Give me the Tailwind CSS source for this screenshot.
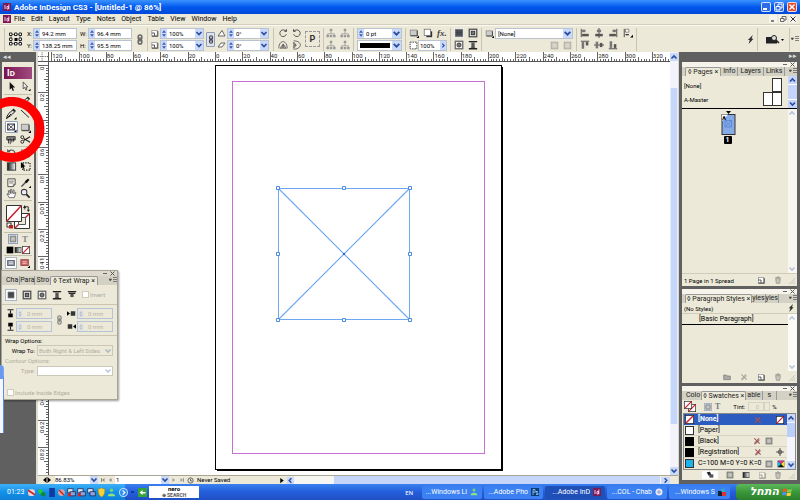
<!DOCTYPE html>
<html lang="en">
<head>
<meta charset="utf-8">
<title>Adobe InDesign CS3</title>
<script src="https://cdn.jsdelivr.net/npm/@tailwindcss/browser@4"></script>
</head>
<body class="h-screen overflow-hidden flex flex-col bg-[#ece9d8] text-black text-[7px] leading-[9px] font-['Roboto',sans-serif]">

<svg class="absolute w-0 h-0" aria-hidden="true">
  <symbol id="down" viewBox="0 0 8 8"><path d="M1.500 2.500L4 5L6.500 2.500" fill="none" stroke="#2a4a9a" stroke-width="1.600"/></symbol>
  <symbol id="up" viewBox="0 0 8 8"><path d="M1.500 5.500L4 3L6.500 5.500" fill="none" stroke="#2a4a9a" stroke-width="1.600"/></symbol>
  <symbol id="right" viewBox="0 0 8 8"><path d="M3 1.500L5.500 4L3 6.500" fill="none" stroke="#2a4a9a" stroke-width="1.600"/></symbol>
  <symbol id="left" viewBox="0 0 8 8"><path d="M5 1.500L2.500 4L5 6.500" fill="none" stroke="#2a4a9a" stroke-width="1.600"/></symbol>
  <symbol id="spin" viewBox="0 0 6 9"><rect width="6" height="9" fill="#c9d9fb"/><path d="M1 3.800L3 1.300L5 3.800zM1 5.200L3 7.700L5 5.200z" fill="#3c5ca8"/></symbol>
  <symbol id="chain" viewBox="0 0 8 12"><rect x="2" y="1" width="4" height="5" rx="2" fill="none" stroke="currentColor" stroke-width="1.600"/><rect x="2" y="6" width="4" height="5" rx="2" fill="none" stroke="currentColor" stroke-width="1.600"/><path d="M4 3.500V8.500" stroke="currentColor" stroke-width="1.600"/></symbol>
  <symbol id="menu" viewBox="0 0 8 8"><path d="M0 3h2.600L1.300 5zM4 1.500h4M4 3.500h4M4 5.500h4" fill="#444" stroke="#555" stroke-width=".7"/></symbol>
  <symbol id="id" viewBox="0 0 8 8"><rect width="8" height="8" fill="#7d1a55"/><path d="M2 2V6M4 3.500H5.500V6H4zM5.800 1.500V6" stroke="#fbd8ec" stroke-width=".9" fill="none"/></symbol>
  <symbol id="arrow" viewBox="0 0 12 12"><path d="M4 1V9.500L6 7.700L7.300 11L8.700 10.300L7.400 7.200H10z" fill="#111"/></symbol>
  <symbol id="arrow2" viewBox="0 0 12 12"><path d="M3.500 1V8.500L5.200 7L6.500 10L7.600 9.400L6.500 6.500H8.500z" fill="#eee" stroke="#333" stroke-width=".8"/><path d="M9 11h2.500V8.500z"/></symbol>
  <symbol id="pen" viewBox="0 0 12 12"><path d="M1.500 10.500C2 7 4.500 4 8 2L9.500 4C7 7 4 9 1.500 10.500L6 6" fill="#ddd" stroke="#222" stroke-width="1"/><path d="M8 1L10.500 3.500" stroke="#222" stroke-width="1.500"/><path d="M9 11.500h2.500V9z"/></symbol>
  <symbol id="line" viewBox="0 0 12 12"><path d="M2 2L10 9.500" stroke="#222" stroke-width="1"/></symbol>
  <symbol id="frame" viewBox="0 0 12 12"><rect x="1.500" y="2.500" width="8" height="7" fill="#fff" stroke="#223" stroke-width="1.200"/><path d="M1.500 2.500L9.500 9.500M9.500 2.500L1.500 9.500" stroke="#334"/><path d="M9 12h3V9z"/></symbol>
  <symbol id="rect" viewBox="0 0 12 12"><rect x="1.500" y="2.500" width="8" height="6.500" fill="#ccc" stroke="#888"/><path d="M2 9.500H10V3" fill="none" stroke="#333" stroke-width="1"/><path d="M9 12h3V9z"/></symbol>
  <symbol id="button" viewBox="0 0 12 12"><path d="M1 2H11V6H1z" fill="#888" stroke="#222"/><path d="M3 5V10M5 4V11M7 5V9M9 4V8" stroke="#222"/></symbol>
  <symbol id="scissors" viewBox="0 0 12 12"><path d="M4 7L11 3M4 5L11 9" stroke="#222" stroke-width="1.200"/><circle cx="2.500" cy="3.500" r="1.600" fill="none" stroke="#222"/><circle cx="2.500" cy="8.500" r="1.600" fill="none" stroke="#222"/></symbol>
  <symbol id="cw" viewBox="0 0 12 12"><path d="M9.500 4A4 4 0 1 0 10 7.500" fill="none" stroke="#555" stroke-width="1.200"/><path d="M7 4.500H10.800V1z" fill="#555"/></symbol>
  <symbol id="ccw" viewBox="0 0 12 12"><path d="M2.500 4A4 4 0 1 1 2 7.500" fill="none" stroke="#555" stroke-width="1.200"/><path d="M5 4.500H1.200V1z" fill="#555"/></symbol>
  <symbol id="type" viewBox="0 0 12 12"><path d="M2.500 4V2H9.500V4M6 2V10M4.500 10H7.500" fill="none" stroke="#222" stroke-width="1.200"/></symbol>
  <symbol id="scale" viewBox="0 0 12 12"><rect x="1.500" y="6" width="4" height="4" fill="#fff" stroke="#222"/><rect x="1.500" y="2" width="8" height="8" fill="none" stroke="#555" stroke-dasharray="1.500 1"/></symbol>
  <linearGradient id="g"><stop stop-color="#111"/><stop offset="1" stop-color="#fff"/></linearGradient>
  <symbol id="grad" viewBox="0 0 12 12"><rect x="1.500" y="2" width="9" height="8" fill="url(#g)" stroke="#333"/></symbol>
  <symbol id="free" viewBox="0 0 12 12"><rect x="3" y="2" width="8" height="8" fill="none" stroke="#222" stroke-width="1.300" stroke-dasharray="1.500 1.200"/><path d="M1 1V8L3 6.500L4 9L5 8.500L4 6H6z"/></symbol>
  <symbol id="note" viewBox="0 0 12 12"><path d="M2 2H10V8L8 10.500H2z" fill="#f6f4e6" stroke="#444"/><path d="M3.500 4.500H8.500M3.500 6.500H8M10 8H8V10.500" stroke="#555" fill="none" stroke-width=".8"/></symbol>
  <symbol id="dropper" viewBox="0 0 12 12"><path d="M1.500 10.500L7 5" stroke="#444" stroke-width="1.500"/><path d="M6 4L8 6M7 5L9.500 2.500" stroke="#111" stroke-width="2.400"/><path d="M9.500 12H12V9.500z"/></symbol>
  <symbol id="hand" viewBox="0 0 12 12"><path d="M3.500 10.500L1 6.500L2 6L3.500 7.500L2.500 3L3.700 2.800L4.800 6L5 1.500H6.200L6.500 6L8 2L9 2.400L8.300 6.500L10 4.500L10.800 5L9 10.500z" fill="#fff" stroke="#444" stroke-width=".8"/></symbol>
  <symbol id="zoom" viewBox="0 0 12 12"><circle cx="4.500" cy="4.500" r="3" fill="#eef" stroke="#444" stroke-width="1.100"/><path d="M7 7L10.500 10.500" stroke="#222" stroke-width="2"/></symbol>
  <symbol id="none" viewBox="0 0 12 12"><rect x=".5" y=".5" width="11" height="11" fill="#fff" stroke="#222"/><path d="M1 11L11 1" stroke="#d81e2c" stroke-width="1.800"/></symbol>
  <symbol id="sq" viewBox="0 0 12 12"><rect x="1.500" y="1.500" width="9" height="9" fill="#a4a49e" stroke="#666"/><rect x="3.500" y="3.500" width="5" height="5" fill="#c4c4c0"/></symbol>
  <symbol id="black" viewBox="0 0 12 12"><rect x="1" y="1" width="10" height="10"/></symbol>
  <symbol id="screen" viewBox="0 0 12 12"><rect x="1" y="2" width="10" height="8" fill="#8c98a8" stroke="#445"/><path d="M3 4.500H9M3 7H9" stroke="#fff"/></symbol>
  <symbol id="screenr" viewBox="0 0 12 12"><rect x="1" y="2" width="9" height="7" fill="#c66" stroke="#844"/><path d="M3 4.500H8M3 6.500H8" stroke="#f7c8c8"/><path d="M9 12H12V9z"/></symbol>
  <symbol id="w1" viewBox="0 0 12 12"><rect x="1.500" y="1.500" width="9" height="9" fill="#555b60" stroke="#777"/><path d="M2 3.500H10M2 5.500H10M2 7.500H10" stroke="#2e3338" stroke-width=".8"/></symbol>
  <symbol id="w2" viewBox="0 0 12 12"><rect x="1.500" y="1.500" width="9" height="9" fill="#ddd" stroke="#555" stroke-width="1.600"/><rect x="4" y="4" width="4" height="4" fill="#777" stroke="#333"/></symbol>
  <symbol id="w3" viewBox="0 0 12 12"><rect x="1.500" y="1.500" width="9" height="9" fill="#eee" stroke="#666" stroke-width="1.500"/><circle cx="6" cy="6" r="2.400" fill="#777" stroke="#333"/></symbol>
  <symbol id="w4" viewBox="0 0 12 12"><path d="M1 2H11M1 10.500H11" stroke="#222" stroke-width="1.600"/><path d="M3 3L6 5.500L9 3zM3 9.500L6 7L9 9.500z" fill="#555"/><rect x="4" y="4" width="4" height="4.500" fill="#555"/></symbol>
  <symbol id="w5" viewBox="0 0 12 12"><path d="M1 2H11M2 4H10" stroke="#222" stroke-width="1.400"/><rect x="4" y="4.500" width="4" height="4" fill="#555"/></symbol>
  <symbol id="al" viewBox="0 0 12 12"><path d="M1.500 1V11" stroke="#333"/><rect x="2.500" y="2" width="4" height="3" fill="#777"/><rect x="2.500" y="7" width="8" height="3" fill="#555"/></symbol>
  <symbol id="ac" viewBox="0 0 12 12"><path d="M6 0V12" stroke="#333"/><rect x="3.500" y="2" width="5" height="3" fill="#777"/><rect x="1.500" y="7" width="9" height="3" fill="#555"/></symbol>
  <symbol id="ar" viewBox="0 0 12 12"><path d="M10.500 1V11" stroke="#333"/><rect x="5.500" y="2" width="4" height="3" fill="#777"/><rect x="1.500" y="7" width="8" height="3" fill="#555"/></symbol>
  <symbol id="at" viewBox="0 0 12 12"><path d="M1 1.500H11" stroke="#333"/><rect x="2" y="2.500" width="3" height="8" fill="#777"/><rect x="7" y="2.500" width="3" height="4" fill="#555"/></symbol>
  <symbol id="am" viewBox="0 0 12 12"><path d="M0 6H12" stroke="#333"/><rect x="2" y="2" width="3" height="8" fill="#777"/><rect x="7" y="3.500" width="3" height="5" fill="#555"/></symbol>
  <symbol id="ab" viewBox="0 0 12 12"><path d="M1 10.500H11" stroke="#333"/><rect x="2" y="1.500" width="3" height="8" fill="#777"/><rect x="7" y="5" width="3" height="4.500" fill="#555"/></symbol>
  <symbol id="rel" viewBox="0 0 12 12"><path d="M1.500 1V11" stroke="#333"/><path d="M3 1.500H7V5H3z" fill="#fff" stroke="#777"/><path d="M3 8H7" stroke="#333" stroke-width="1.500"/><path d="M8.500 11.500H12V8z"/></symbol>
  <symbol id="tree" viewBox="0 0 12 12"><path d="M6 4V7M2 10V7H10V10" fill="none" stroke="#999"/><path d="M4.500 1H7.500V4H4.500zM.5 8.500H3.500V11H.5zM8.500 8.500H11.500V11H8.500zM4.500 8.500H7.500V11H4.500z" fill="#999"/></symbol>
  <symbol id="flip" viewBox="0 0 12 12"><path d="M1 10C1 4 4 2 6 2S11 4 11 10" fill="none" stroke="#555"/><path d="M6 5L2.500 10H5.500zM6.500 5L10 10H6.500z" fill="#aaa" stroke="#444" stroke-width=".7"/></symbol>
  <symbol id="flipv" viewBox="0 0 12 12"><path d="M2 1C8 1 10 4 10 6S8 11 2 11" fill="none" stroke="#555"/><path d="M5 6L2 2.500V5.500zM5 6.500L2 10V6.500z" fill="#aaa" stroke="#444" stroke-width=".7"/></symbol>
  <symbol id="shadow" viewBox="0 0 12 12"><path d="M4 4H11V11H4z" fill="#333"/><rect x="1.500" y="1.500" width="7.500" height="7.500" fill="#fff" stroke="#777"/></symbol>
  <symbol id="dashed" viewBox="0 0 12 12"><rect x="1.500" y="1.500" width="9" height="9" fill="#fff" stroke="#444" stroke-width="1.300" stroke-dasharray="2 1.200"/></symbol>
  <symbol id="bolt" viewBox="0 0 12 12"><path d="M9 0L2.500 6.500H5L3.500 12L10 5H7.500z" fill="#333"/></symbol>
  <symbol id="trash" viewBox="0 0 12 12"><path d="M2.500 4L3.500 11H8.500L9.500 4z" fill="#c8c6ba" stroke="#888"/><path d="M2 2.500H10M5 1H7" stroke="#888" stroke-width="1.200"/></symbol>
  <symbol id="new" viewBox="0 0 12 12"><rect x="2" y="2" width="8" height="8" fill="#fff" stroke="#888"/><path d="M2 6H6V10M2 11H11V3" fill="none" stroke="#333" stroke-width="1.200"/></symbol>
  <symbol id="folder" viewBox="0 0 12 12"><path d="M1 3H5L6 4.500H11V10H1z" fill="#aaa" stroke="#777"/></symbol>
  <symbol id="grip" viewBox="0 0 12 12"><path d="M12 2L2 12M12 6L6 12M12 10L10 12" stroke="#aaa"/></symbol>
  <symbol id="pencilx" viewBox="0 0 12 12"><path d="M2 10L9 2M2 2L10 10" stroke="#b0505c" stroke-width="1.600"/><path d="M3 11L10 4" stroke="#554" stroke-width="1.400"/></symbol>
  <symbol id="cross" viewBox="0 0 12 12"><circle cx="6" cy="6" r="2.800" fill="none" stroke="#222"/><path d="M6 0V12M0 6H12" stroke="#222"/></symbol>
  <symbol id="cmyk" viewBox="0 0 12 12"><rect x="1" y="1" width="10" height="10" fill="#111"/><path d="M1 1L6 6L1 11z" fill="#19b5e8"/><path d="M11 1L6 6L11 11z" fill="#f3e32a"/><path d="M1 1H11L6 6z" fill="#d8359a"/></symbol>
  <symbol id="swap" viewBox="0 0 8 8"><path d="M2 5V2H6V6" fill="none" stroke="#222"/><path d="M0 3.500L3.500 3.500L2 0zM4.500 5.500H8L6 8z" fill="#222"/></symbol>
  <symbol id="msn" viewBox="0 0 12 12"><circle cx="6" cy="3" r="2.300" fill="#7ad66a"/><path d="M1 11C1 6 11 6 11 11z" fill="#8fe27e"/></symbol>
  <symbol id="pcs" viewBox="0 0 12 12"><rect x="1" y="1" width="7" height="5.500" fill="#dde6f7" stroke="#224"/><rect x="4" y="5" width="7" height="5.500" fill="#8aa6e0" stroke="#224"/></symbol>
  <symbol id="pcx" viewBox="0 0 12 12"><use href="#pcs"/><path d="M1 7L5 11M5 7L1 11" stroke="#e02020" stroke-width="1.600"/></symbol>
</svg>

<!-- Title bar -->
<header class="h-[14px] shrink-0 flex items-center px-[3px] gap-[3px] bg-linear-to-b from-[#3a92ff] via-[#0058ee] to-[#0048d8] text-white">
  <svg class="size-[8px]"><use href="#id"/></svg>
  <h1 class="flex-1 font-bold text-[8px] leading-[13px] whitespace-nowrap">Adobe InDesign CS3 - [Untitled-1 @ 86%]</h1>
  <button aria-label="Minimize" class="size-[10px] rounded-[2px] border border-white/80 bg-[#2f6ae8] flex items-end p-[1px]"><span class="w-[4px] h-[2px] bg-white"></span></button>
  <button aria-label="Restore" class="size-[10px] rounded-[2px] border border-white/80 bg-[#2f6ae8]"><svg viewBox="0 0 8 8" class="size-[8px]"><path d="M3 3V1H7V5H5M1 3.500H5V7H1z" fill="none" stroke="#fff"/></svg></button>
  <button aria-label="Close" class="size-[10px] rounded-[2px] border border-white/80 bg-[#e0492a]"><svg viewBox="0 0 8 8" class="size-[8px]"><path d="M1.500 1.500L6.500 6.500M6.500 1.500L1.500 6.500" stroke="#fff" stroke-width="1.500"/></svg></button>
</header>

<!-- Menu bar -->
<nav class="h-[11px] shrink-0 flex items-center pl-[3px] pr-[3px] gap-[6px] border-b border-[#d2cebc]">
  <svg class="size-[8px] -mr-[3px]"><use href="#id"/></svg>
  <button>File</button><button>Edit</button><button>Layout</button><button>Type</button><button>Notes</button><button>Object</button><button>Table</button><button>View</button><button>Window</button><button>Help</button>
  <div class="ml-auto flex gap-[2px]">
    <button aria-label="Minimize document" class="size-[8px] bg-[#f6f4ec]"><svg viewBox="0 0 8 8"><path d="M2 6H5" stroke="#333" stroke-width="1.200"/></svg></button>
    <button aria-label="Restore document" class="size-[8px] bg-[#f6f4ec]"><svg viewBox="0 0 8 8"><path d="M3 3V1.500H7V5H5M1.500 3.500H5V6.500H1.500z" fill="none" stroke="#444" stroke-width=".8"/></svg></button>
    <button aria-label="Close document" class="size-[8px] bg-[#f6f4ec]"><svg viewBox="0 0 8 8"><path d="M1.500 1.500L6.500 6.500M6.500 1.500L1.500 6.500" stroke="#333"/></svg></button>
  </div>
</nav>

<!-- Control bar -->
<section aria-label="Control" class="h-[27px] shrink-0 flex items-center border-t border-[#faf8f0]">
  <div class="w-[5px] h-[23px] border-r border-[#c9c5b2] mr-[4px]"></div>
  <svg class="w-[13px] h-[14px] mr-[4px]" viewBox="0 0 13 14"><path d="M2 2.500H11V11.500H2z" fill="none" stroke="#777"/><path d="M5.500 6H8.500V9H5.500z"/><g fill="#fff" stroke="#222"><path d="M.5 1H3V3.500H.5zM5.500 1H8V3.500H5.500zM10 1H12.500V3.500H10zM.5 6H3V8.500H.5zM10 6H12.500V8.500H10zM.5 10.500H3V13H.5zM5.500 10.500H8V13H5.500zM10 10.500H12.500V13H10z"/></g></svg>
  <div class="flex flex-col gap-[1px] w-[50px] text-[6px] ml-[1px]">
    <label class="flex items-center h-[11px]"><span class="w-[6px]">X:</span><span class="flex flex-1 min-w-0 h-[11px] bg-white border border-[#b9c3d0] items-center"><svg class="w-[6px] h-[9px]"><use href="#spin"/></svg><input class="min-w-0 flex-1 pl-[2px] outline-none" value="94.2 mm"></span></label>
    <label class="flex items-center h-[11px]"><span class="w-[6px]">Y:</span><span class="flex flex-1 min-w-0 h-[11px] bg-white border border-[#b9c3d0] items-center"><svg class="w-[6px] h-[9px]"><use href="#spin"/></svg><input class="min-w-0 flex-1 pl-[2px] outline-none" value="138.25 mm"></span></label>
  </div>
  <div class="flex flex-col gap-[1px] w-[52px] ml-[3px] text-[6px]">
    <label class="flex items-center h-[11px]"><span class="w-[8px]">W:</span><span class="flex flex-1 min-w-0 h-[11px] bg-white border border-[#b9c3d0] items-center"><svg class="w-[6px] h-[9px]"><use href="#spin"/></svg><input class="min-w-0 flex-1 pl-[2px] outline-none" value="96.4 mm"></span></label>
    <label class="flex items-center h-[11px]"><span class="w-[8px]">H:</span><span class="flex flex-1 min-w-0 h-[11px] bg-white border border-[#b9c3d0] items-center"><svg class="w-[6px] h-[9px]"><use href="#spin"/></svg><input class="min-w-0 flex-1 pl-[2px] outline-none" value="95.5 mm"></span></label>
  </div>
  <button aria-label="Constrain size" class="w-[15px] flex justify-center text-[#666]"><svg class="w-[8px] h-[11px]"><use href="#chain"/></svg></button>
  <div class="w-px h-[23px] bg-[#c9c5b2] mr-[2px]"></div>
  <div class="flex flex-col gap-[1px] w-[54px] text-[6px]">
    <label class="flex items-center h-[11px]"><svg class="w-[9px] h-[8px] mr-px" role="img" aria-label="Scale X"><use href="#new"/></svg><span class="flex flex-1 min-w-0 h-[11px] bg-white border border-[#b9c3d0] items-center"><svg class="w-[6px] h-[9px]"><use href="#spin"/></svg><select class="appearance-none min-w-0 flex-1 pl-[2px] outline-none"><option>100%</option></select><svg class="w-[8px] h-[9px] bg-[#c9d9fb]"><use href="#down"/></svg></span></label>
    <label class="flex items-center h-[11px]"><svg class="w-[9px] h-[8px] mr-px" role="img" aria-label="Scale Y"><use href="#new"/></svg><span class="flex flex-1 min-w-0 h-[11px] bg-white border border-[#b9c3d0] items-center"><svg class="w-[6px] h-[9px]"><use href="#spin"/></svg><select class="appearance-none min-w-0 flex-1 pl-[2px] outline-none"><option>100%</option></select><svg class="w-[8px] h-[9px] bg-[#c9d9fb]"><use href="#down"/></svg></span></label>
  </div>
  <button aria-label="Constrain scale" class="w-[9px] h-[15px] mx-[2px] border border-[#8e9cb4] bg-[#dfe3ea] rounded-[1px] flex items-center justify-center text-[#445]"><svg class="w-[6px] h-[11px]"><use href="#chain"/></svg></button>
  <div class="flex flex-col gap-[1px] w-[52px] text-[6px]">
    <label class="flex items-center h-[11px]"><svg class="w-[9px] h-[8px] mr-px" viewBox="0 0 9 8" role="img" aria-label="Rotation"><path d="M1 7H8L5 1.500z" fill="#fff" stroke="#666"/></svg><span class="flex flex-1 min-w-0 h-[11px] bg-white border border-[#b9c3d0] items-center"><svg class="w-[6px] h-[9px]"><use href="#spin"/></svg><select class="appearance-none min-w-0 flex-1 pl-[2px] outline-none"><option>0°</option></select><svg class="w-[8px] h-[9px] bg-[#c9d9fb]"><use href="#down"/></svg></span></label>
    <label class="flex items-center h-[11px]"><svg class="w-[9px] h-[8px] mr-px" viewBox="0 0 9 8" role="img" aria-label="Shear"><path d="M1 6H5L8 2H4z" fill="#fff" stroke="#666"/></svg><span class="flex flex-1 min-w-0 h-[11px] bg-white border border-[#b9c3d0] items-center"><svg class="w-[6px] h-[9px]"><use href="#spin"/></svg><select class="appearance-none min-w-0 flex-1 pl-[2px] outline-none"><option>0°</option></select><svg class="w-[8px] h-[9px] bg-[#c9d9fb]"><use href="#down"/></svg></span></label>
  </div>
  <div class="w-px h-[23px] bg-[#c9c5b2] mx-[4px]"></div>
  <div class="grid grid-cols-2 gap-x-[4px] gap-y-[2px]">
    <svg class="size-[10px]"><use href="#cw"/></svg><svg class="size-[10px]"><use href="#ccw"/></svg><svg class="size-[10px]"><use href="#flip"/></svg><svg class="size-[10px]"><use href="#flipv"/></svg>
  </div>
  <div class="w-[15px] h-[16px] mx-[3px] flex items-center justify-center border border-dashed border-[#999] text-[9px] font-bold text-[#333]">P</div>
  <div class="w-px h-[23px] bg-[#c9c5b2] mr-[2px]"></div>
  <div class="grid grid-cols-2 gap-x-[4px] gap-y-[2px]">
    <svg class="size-[10px]"><use href="#tree"/></svg><svg class="size-[10px]"><use href="#tree"/></svg><svg class="size-[10px]"><use href="#tree"/></svg><svg class="size-[10px]"><use href="#tree"/></svg>
  </div>
  <div class="w-px h-[23px] bg-[#c9c5b2] mx-[3px]"></div>
  <div class="flex flex-col gap-[1px] w-[45px] text-[6px]">
    <span class="flex h-[11px] bg-white border border-[#b9c3d0] items-center"><svg class="w-[6px] h-[9px]"><use href="#spin"/></svg><select aria-label="Stroke weight" class="appearance-none min-w-0 flex-1 pl-[2px] outline-none"><option>0 pt</option></select><svg class="size-[9px] bg-[#c9d9fb]"><use href="#down"/></svg></span>
    <button aria-label="Stroke type" class="flex h-[11px] bg-white border border-[#b9c3d0] items-center"><span class="flex-1 h-[5px] bg-black mx-[2px]"></span><svg class="size-[9px] bg-[#c9d9fb]"><use href="#down"/></svg></button>
  </div>
  <div class="w-px h-[23px] bg-[#c9c5b2] mx-[3px]"></div>
  <div class="flex flex-col gap-[1px] w-[38px] text-[6px]">
    <div class="flex h-[11px] items-center gap-[4px]"><svg class="size-[10px]"><use href="#rect"/></svg><svg class="size-[10px]"><use href="#shadow"/></svg><i class="text-[9px] font-bold text-[#444] font-['Liberation_Serif',serif]">fx.</i></div>
    <label class="flex h-[11px] items-center"><svg class="size-[9px]" role="img" aria-label="Opacity"><use href="#dashed"/></svg><span class="flex flex-1 min-w-0 h-[11px] bg-white border border-[#b9c3d0] items-center"><input class="min-w-0 flex-1 pl-px outline-none" value="100%"><svg class="w-[6px] h-[9px] bg-[#c9d9fb]"><use href="#right"/></svg></span></label>
  </div>
  <div class="w-px h-[23px] bg-[#c9c5b2] mx-[3px]"></div>
  <div class="grid grid-cols-2 gap-x-[4px] gap-y-[2px]">
    <svg class="size-[10px] bg-white"><use href="#w1"/></svg><svg class="size-[10px]"><use href="#w2"/></svg><svg class="size-[10px]"><use href="#w3"/></svg><svg class="size-[10px]"><use href="#w4"/></svg>
  </div>
  <div class="w-px h-[23px] bg-[#c9c5b2] mx-[3px]"></div>
  <div class="flex flex-col gap-[1px] w-[88px] text-[6px]">
    <label class="flex h-[11px] items-center gap-px"><svg class="size-[9px]" role="img" aria-label="Object style"><use href="#rect"/></svg><span class="flex flex-1 min-w-0 h-[11px] bg-white border border-[#b9c3d0] items-center"><select class="appearance-none min-w-0 flex-1 pl-[2px] outline-none"><option>[None]</option></select><svg class="size-[9px] bg-[#c9d9fb]"><use href="#down"/></svg></span></label>
    <div class="flex h-[11px] items-center justify-end gap-[4px] pr-px opacity-50"><svg class="size-[9px]"><use href="#sq"/></svg><svg class="size-[9px]"><use href="#sq"/></svg></div>
  </div>
  <div class="w-px h-[23px] bg-[#c9c5b2] mx-[3px]"></div>
  <div class="grid grid-cols-3 gap-x-[4px] gap-y-[2px]">
    <svg class="size-[10px]"><use href="#al"/></svg><svg class="size-[10px]"><use href="#ac"/></svg><svg class="size-[10px]"><use href="#ar"/></svg>
    <svg class="size-[10px]"><use href="#at"/></svg><svg class="size-[10px]"><use href="#am"/></svg><svg class="size-[10px]"><use href="#ab"/></svg>
  </div>
  <svg class="size-[10px] ml-[5px] mb-[12px]"><use href="#rel"/></svg>
  <div class="w-px h-[23px] bg-[#c9c5b2] ml-[3px]"></div>
  <button aria-label="Quick apply" class="ml-auto"><svg class="size-[9px]"><use href="#bolt"/></svg></button>
  <div class="w-px h-[23px] bg-[#c9c5b2] ml-[2px] mr-[6px]"></div>
  <button aria-label="Bridge" class="w-[24px]"><svg class="w-[22px] h-[10px]" viewBox="0 0 22 10"><path d="M2 3H10L13 6V9.500H2z" fill="#222"/><circle cx="10" cy="4" r="2.500" fill="#ddd" stroke="#222"/><path d="M12 6L15 9" stroke="#222" stroke-width="1.500"/><path d="M17 5h3l-1.500 2z"/></svg></button>
  <div class="w-px h-[23px] bg-[#c9c5b2] mx-[1px]"></div>
  <button aria-label="Control menu" class="mr-px"><svg class="size-[8px]"><use href="#menu"/></svg></button>
</section>

<!-- Workspace -->
<div class="relative flex-1 min-h-0 flex bg-[#606060]">

  <aside aria-label="Tools" class="w-[36px] shrink-0 pr-[2px] pl-[2px]">
    <div class="h-[10px] text-white/80 leading-[10px] pl-px">◂◂</div>
    <div class="bg-[#ece9d8] h-[209px] px-[2px] pt-[5px]">
      <div class="h-[12px] bg-linear-to-r from-[#7a1350] to-[#a04a80] text-white font-bold text-[9px] leading-[12px] pl-[3px]">I<span class="text-[8px]">D</span></div>
      <div class="grid grid-cols-2 justify-items-center items-center py-[2px] border-b border-[#c4c0ae]"><button aria-label="Selection"><svg class="size-[11px]"><use href="#arrow"/></svg></button><button aria-label="Direct selection"><svg class="size-[11px]"><use href="#arrow2"/></svg></button></div>
      <div class="grid grid-cols-2 justify-items-center items-center gap-y-px py-px border-b border-[#c4c0ae]">
        <button aria-label="Type"><svg class="size-[11px]"><use href="#type"/></svg></button><button aria-label="Pencil"><svg class="size-[11px]"><use href="#pen"/></svg></button>
        <button aria-label="Pen"><svg class="size-[12px]"><use href="#pen"/></svg></button><button aria-label="Line"><svg class="size-[12px]"><use href="#line"/></svg></button>
        <button aria-label="Rectangle frame" class="bg-white border border-[#8ea0be] rounded-[1px]"><svg class="w-[11px] h-[10px]"><use href="#frame"/></svg></button><button aria-label="Rectangle"><svg class="size-[11px]"><use href="#rect"/></svg></button>
        <button aria-label="Button"><svg class="size-[10px]"><use href="#button"/></svg></button><button aria-label="Scissors"><svg class="size-[11px]"><use href="#scissors"/></svg></button>
      </div>
      <div class="grid grid-cols-2 justify-items-center items-center gap-y-[2px] pt-px pb-[2px] border-b border-[#c4c0ae]">
        <button aria-label="Rotate"><svg class="size-[11px]"><use href="#ccw"/></svg></button><button aria-label="Scale"><svg class="size-[11px]"><use href="#scale"/></svg></button>
        <button aria-label="Gradient"><svg class="size-[11px]"><use href="#grad"/></svg></button><button aria-label="Free transform"><svg class="size-[11px]"><use href="#free"/></svg></button>
      </div>
      <div class="grid grid-cols-2 justify-items-center items-center pt-[2px] pb-px border-b border-[#c4c0ae]">
        <button aria-label="Note"><svg class="size-[11px]"><use href="#note"/></svg></button><button aria-label="Eyedropper"><svg class="size-[11px]"><use href="#dropper"/></svg></button>
        <button aria-label="Hand"><svg class="size-[11px]"><use href="#hand"/></svg></button><button aria-label="Zoom"><svg class="size-[11px]"><use href="#zoom"/></svg></button>
      </div>
      <div class="pt-[4px] pb-[3px] border-b border-[#c4c0ae]">
        <svg class="w-[26px] h-[24px] ml-px" viewBox="0 0 26 24"><path d="M9.500 8.500H24.500V23.500H9.500z" fill="#fff" stroke="#333"/><path d="M10 23L24 9" stroke="#c8202e" stroke-width="1.500"/><path d="M13.500 12.500H20.500V19.500H13.500z" fill="#ece9d8" stroke="#555"/><path d="M1.500 .5H16.500V16.500H1.500z" fill="#fff" stroke="#333"/><path d="M2 16L16 1" stroke="#c8202e" stroke-width="1.500"/><use href="#swap" x="18" y="0" width="7" height="7"/><rect x="2" y="18" width="4" height="4" fill="#fff" stroke="#333"/><path d="M4 20H8V23.500H4z" fill="#b22"/></svg>
      </div>
      <div class="flex justify-center gap-[4px] py-px items-center"><button aria-label="Container" class="border border-[#8ea0be] bg-white"><svg class="size-[8px]"><use href="#sq"/></svg></button><span class="font-bold text-[#888] font-['Liberation_Serif',serif] text-[9px] leading-[10px]">T</span></div>
      <div class="flex justify-between px-[2px] py-px items-center border-b border-[#c4c0ae]"><svg class="size-[8px]"><use href="#black"/></svg><svg class="size-[8px]"><use href="#grad"/></svg><svg class="size-[8px]"><use href="#none"/></svg></div>
      <div class="grid grid-cols-2 justify-items-center items-center pt-px"><button aria-label="Normal view" class="border border-[#aab4c8] bg-white p-px"><svg class="size-[8px]"><use href="#screen"/></svg></button><button aria-label="Preview"><svg class="size-[10px]"><use href="#screenr"/></svg></button></div>
    </div>
  </aside>

  <main class="flex-1 min-w-0 flex flex-col bg-white border-l-2 border-[#dedbd0]">
    <div class="flex-1 min-h-0 flex">
      <div class="flex-1 min-w-0 flex flex-col">
        <div class="flex h-[10px] shrink-0 border-b border-[#555]">
          <svg class="w-[11px] h-[9px] border-r border-[#555] shrink-0" viewBox="0 0 11 9"><path d="M0 4.500H11M4.500 0V9" stroke="#444" stroke-dasharray="1 1"/></svg>
          <svg id="hr" class="flex-1 min-w-0 h-[9px]"></svg>
        </div>
        <div class="flex-1 min-h-0 flex">
          <svg id="vr" class="w-[11px] h-full shrink-0 border-r border-[#555]"></svg>
          <div class="flex-1 min-w-0 overflow-hidden pl-[166px] pt-[3px]">
            <svg class="w-[290px] h-[408px]" viewBox="0 0 290 408" fill="none">
              <path d="M286 2H288V406H2V404H286z" fill="#000"/>
              <rect x=".5" y=".5" width="286" height="404" fill="#fff" stroke="#000"/>
              <rect x="17.500" y="16.500" width="252" height="372" stroke="#c86fd6"/>
              <rect x="63.500" y="123.500" width="131" height="131" stroke="#6ea8f2"/>
              <path d="M63.500 123.500L194.500 254.500" stroke="#6ea8f2" stroke-width="1.100"/>
              <path d="M63.500 254.500L194.500 123.500" stroke="#6ea8f2" stroke-width="1.100"/>
              <path fill="#fff" stroke="#4a8ae0" d="M61.500 121.500h3v3h-3zM127.500 121.500h3v3h-3zM193.500 121.500h3v3h-3zM61.500 187.500h3v3h-3zM193.500 187.500h3v3h-3zM61.500 253.500h3v3h-3zM127.500 253.500h3v3h-3zM193.500 253.500h3v3h-3z"/>
              <path d="M128 188h2v2h-2z" fill="#2a62c8"/>
            </svg>
          </div>
        </div>
      </div>
      <div class="w-[8px] shrink-0 flex flex-col bg-[#f3f4fb]">
        <svg class="size-[8px] bg-[#c9d9fb] my-px"><use href="#up"/></svg>
        <div class="mt-[26px] flex-1 mb-[43px] bg-[#c6d5fa] border-x border-[#e4ecfd]"></div>
        <svg class="size-[8px] bg-[#c9d9fb]"><use href="#down"/></svg>
      </div>
    </div>
    <div class="h-[9px] shrink-0 flex items-center bg-[#ece9d8] border-t border-[#aaa694] text-[6px] leading-[8px]">
      <svg class="w-[17px] h-[8px]" viewBox="0 0 17 8"><path d="M5 4L8 1.500V6.500zM13 4L10 1.500V6.500z"/><path d="M9 1V7" stroke="#000"/></svg>
      <span class="flex w-[43px] h-[8px] bg-white items-center"><select aria-label="Zoom level" class="appearance-none min-w-0 flex-1 outline-none"><option>86.83%</option></select><svg class="size-[8px] bg-[#c9d9fb]"><use href="#down"/></svg></span>
      <svg class="w-[17px] h-[8px]" viewBox="0 0 17 8"><path d="M3.500 2V6" stroke="#888"/><path d="M4 4L6.500 2V6zM11 4L13.500 2V6z" fill="#888"/></svg>
      <span class="flex w-[54px] h-[8px] bg-white items-center"><select aria-label="Page" class="appearance-none min-w-0 flex-1 pl-px outline-none"><option>1</option></select><svg class="size-[8px] bg-[#c9d9fb]"><use href="#down"/></svg></span>
      <svg class="w-[18px] h-[8px]" viewBox="0 0 18 8"><path d="M14.500 2V6" stroke="#999"/><path d="M6 4L3.500 2V6zM14 4L11.500 2V6z" fill="#999"/></svg>
      <svg class="size-[7px] mr-[3px]" viewBox="0 0 8 8"><circle cx="4" cy="4" r="3" fill="none" stroke="#555"/><path d="M4 2V4.500H6" fill="none" stroke="#555"/></svg>
      <span class="w-[80px]">Never Saved</span>
      <svg class="w-[10px] h-[7px]" viewBox="0 0 10 8"><path d="M3 1L7 4L3 7z"/></svg>
      <svg class="size-[7px] bg-[#c9d9fb]"><use href="#left"/></svg>
      <div class="flex-1 self-stretch bg-[#f6f6f2] flex pl-[40px] pr-px"><div class="flex-1 bg-[#c6d5fa]"></div></div>
      <svg class="w-[9px] h-[7px] bg-[#c9d9fb]"><use href="#right"/></svg>
      <div class="w-[8px]"></div>
    </div>
  </main>

  <aside aria-label="Panels" class="w-[122px] shrink-0 pl-[3px] pr-[3px] pb-[4px] flex flex-col gap-[3px] border-l border-[#d8d5ca]">
    <div class="h-[8px] -mb-px text-white/80 leading-[8px] text-right">▸▸</div>

    <section class="bg-[#ece9d8] h-[224px] flex flex-col">
      <div class="h-[5px] bg-[#f5f3ea] flex justify-end items-center gap-[3px] pr-[2px] shrink-0"><span class="w-[4px] h-px bg-[#666]"></span><svg class="size-[5px]" viewBox="0 0 5 5"><path d="M.5 .5L4.500 4.500M4.500 .5L.5 4.500" stroke="#555"/></svg></div>
      <div class="h-[9px] shrink-0 bg-[#d3d0c4] flex pl-[3px] text-[#222] whitespace-nowrap"><button class="bg-[#ece9d8] border border-b-0 border-[#999] rounded-t-[2px] px-[2px] leading-[8px]">◊ Pages ×</button><button class="px-[2px] border-r border-[#999]">Info</button><button class="px-[2px] border-r border-[#999]">Layers</button><button class="px-[2px] border-r border-[#999]">Links</button><svg class="size-[8px] ml-auto"><use href="#menu"/></svg></div>
      <div class="flex h-[33px] border-b border-black text-[6px]">
        <div class="flex-1 px-[2px] py-[2px] flex flex-col justify-between">
          <div class="flex items-center justify-between h-[14px] pr-[4px]">[None]<span class="w-[10px] h-[14px] bg-white border border-[#333]"></span></div>
          <div class="flex items-center justify-between h-[14px] pr-[4px]">A-Master<span class="flex w-[19px] h-[14px] bg-white border border-[#333]"><span class="w-[9px] border-r border-[#333]"></span></span></div>
        </div>
        <div class="w-[9px] flex flex-col bg-[#c6d5fa]"><svg class="h-[9px] w-[9px] border-b border-white"><use href="#up"/></svg><svg class="mt-auto h-[9px] w-[9px] border-t border-white"><use href="#down"/></svg></div>
      </div>
      <div class="flex flex-1">
        <div class="flex-1 flex flex-col items-center pr-[15px] pt-[2px]">
          <svg class="w-[16px] h-[25px]" viewBox="0 0 16 25"><path d="M6 0h5L8.500 3z"/><rect x="2" y="3.500" width="13" height="20" fill="#86aae6" stroke="#333"/><path d="M2 3.500H8L2 10z" fill="#fff"/><path d="M5 9.500H11.500V16H5zM5 9.500L11.500 16M11.500 9.500L5 16" fill="none" stroke="#5c8ad6"/><text x="2" y="9" font-size="6" font-weight="bold">A</text></svg>
          <span class="bg-black text-white font-bold w-[8px] h-[8px] leading-[8px] text-center rounded-[1px]">1</span>
        </div>
        <div class="w-[9px] bg-[#f7f6f0] flex flex-col justify-between"><svg class="size-[8px] opacity-30"><use href="#up"/></svg><svg class="size-[8px] opacity-30"><use href="#down"/></svg></div>
      </div>
      <div class="h-[13px] flex items-center px-[2px] text-[6px] border-t border-[#d0ccba]"><span class="flex-1">1 Page in 1 Spread</span><svg class="size-[8px] mr-[9px]"><use href="#new"/></svg><svg class="size-[8px] mr-[6px]"><use href="#trash"/></svg><svg class="size-[7px]"><use href="#grip"/></svg></div>
    </section>

    <section class="bg-[#ece9d8] flex-1 flex flex-col">
      <div class="h-[5px] bg-[#f5f3ea] flex justify-end items-center gap-[3px] pr-[2px]"><span class="w-[4px] h-px bg-[#666]"></span><svg class="size-[5px]" viewBox="0 0 5 5"><path d="M.5 .5L4.500 4.500M4.500 .5L.5 4.500" stroke="#555"/></svg></div>
      <div class="h-[9px] bg-[#d3d0c4] flex pl-[3px] text-[#222] whitespace-nowrap"><button class="bg-[#ece9d8] border border-b-0 border-[#999] rounded-t-[2px] px-px leading-[8px]">◊ Paragraph Styles ×</button><button class="border-r border-[#999]">yles</button><button class="border-r border-[#999]">yles</button><svg class="size-[8px] ml-auto"><use href="#menu"/></svg></div>
      <div class="h-[11px] flex items-center justify-between px-[2px] text-[6px] border-b border-[#d0ccba]">(No Styles)<svg class="size-[8px]"><use href="#bolt"/></svg></div>
      <div class="flex-1 flex">
        <div class="flex-1"><div class="h-[11px] pl-[17px] border-b border-black leading-[10px]">[Basic Paragraph]</div></div>
        <div class="w-[9px] bg-[#fbfaf6] flex flex-col justify-between"><svg class="size-[8px] opacity-30"><use href="#up"/></svg><svg class="size-[8px] opacity-30"><use href="#down"/></svg></div>
      </div>
      <div class="h-[12px] flex items-center justify-end gap-[9px] px-[2px]"><svg class="size-[8px]"><use href="#folder"/></svg><svg class="size-[8px] opacity-50 grayscale"><use href="#pencilx"/></svg><svg class="size-[8px]"><use href="#new"/></svg><svg class="size-[8px]"><use href="#trash"/></svg><svg class="size-[7px] -ml-[3px]"><use href="#grip"/></svg></div>
    </section>

    <section class="bg-[#ece9d8] flex flex-col">
      <div class="h-[5px] bg-[#f5f3ea] flex justify-end items-center gap-[3px] pr-[2px]"><span class="w-[4px] h-px bg-[#666]"></span><svg class="size-[5px]" viewBox="0 0 5 5"><path d="M.5 .5L4.500 4.500M4.500 .5L.5 4.500" stroke="#555"/></svg></div>
      <div class="h-[9px] bg-[#d3d0c4] flex pl-[3px] text-[#222] whitespace-nowrap"><button class="px-px">Colo</button><button class="bg-[#ece9d8] border border-b-0 border-[#999] rounded-t-[2px] px-px leading-[8px]">◊ Swatches ×</button><button class="px-px border-r border-[#999]">able</button><button class="px-[5px] border-r border-[#999]">s</button><svg class="size-[8px] ml-auto"><use href="#menu"/></svg></div>
      <div class="h-[13px] flex items-center px-[2px] text-[6px]">
        <svg class="w-[13px] h-[11px] mr-[7px]" viewBox="0 0 13 11"><use href="#none" x="4" y="3" width="8" height="8"/><use href="#none" x="0" y="0" width="8" height="8"/></svg>
        <svg class="size-[8px] border border-[#aab4c8] bg-white"><use href="#sq"/></svg><span class="ml-[3px] text-[#777] font-bold font-['Liberation_Serif',serif] text-[8px]">T</span>
        <label for="tint" class="ml-[13px] mr-[3px]">Tint:</label><input id="tint" disabled value="0" class="w-[16px] h-[9px] border border-[#d6d3c4] text-right pr-[4px] text-[#bbb]"><span class="w-[6px] h-[9px] border border-[#d6d3c4]"></span><span class="ml-[2px]">%</span>
      </div>
      <div class="flex mx-px border border-[#888] text-[7px]">
        <ul class="flex-1 min-w-0">
          <li class="h-[11px] flex items-center gap-[4px] pl-px pr-[3px] bg-[#2c5cc0] text-white font-bold"><svg class="size-[9px]"><use href="#none"/></svg><span class="flex-1">[None]</span><svg class="size-[8px] mr-[10px]"><use href="#pencilx"/></svg><svg class="size-[8px]"><use href="#none"/></svg></li>
          <li class="h-[11px] flex items-center gap-[4px] pl-px border-b border-[#d8d4c2]"><span class="size-[9px] bg-white border border-[#333]"></span>[Paper]</li>
          <li class="h-[11px] flex items-center gap-[4px] pl-px pr-[14px] border-b border-[#d8d4c2]"><span class="size-[9px] bg-black"></span><span class="flex-1">[Black]</span><svg class="size-[8px]"><use href="#pencilx"/></svg><svg class="size-[8px]"><use href="#sq"/></svg></li>
          <li class="h-[11px] flex items-center gap-[4px] pl-px pr-[3px] border-b border-[#d8d4c2]"><span class="size-[9px] bg-black"></span><span class="flex-1">[Registration]</span><svg class="size-[8px] mr-[10px]"><use href="#pencilx"/></svg><svg class="size-[8px]"><use href="#cross"/></svg></li>
          <li class="h-[11px] flex items-center gap-[4px] pl-px pr-[3px]"><span class="size-[9px] bg-[#1fb2ea] border border-[#333] shrink-0"></span><span class="flex-1 whitespace-nowrap">C=100 M=0 Y=0 K=0</span><svg class="size-[8px] shrink-0"><use href="#sq"/></svg><svg class="size-[8px] shrink-0"><use href="#cmyk"/></svg></li>
        </ul>
        <div class="w-[8px] flex flex-col bg-[#f4f6fc]"><svg class="size-[8px] bg-[#c9d9fb]"><use href="#up"/></svg><div class="h-[14px] bg-[#bccefa] mt-px"></div><svg class="size-[8px] mt-auto bg-[#c9d9fb]"><use href="#down"/></svg></div>
      </div>
      <div class="h-[10px] flex items-center justify-end gap-[8px] px-[2px]"><span class="bg-white px-[4px]"><svg class="size-[8px]" viewBox="0 0 12 12"><path d="M1 2L6 1L8 6L4 7z" fill="#222"/><rect x="5" y="5" width="6" height="5" fill="#555"/></svg></span><svg class="size-[8px]"><use href="#sq"/></svg><svg class="size-[8px]"><use href="#grad"/></svg><svg class="size-[8px] opacity-50"><use href="#new"/></svg><svg class="size-[8px]"><use href="#trash"/></svg><svg class="size-[7px] -ml-[2px]"><use href="#grip"/></svg></div>
    </section>
  </aside>

  <!-- Text Wrap floating panel -->
  <section aria-label="Text Wrap" class="absolute left-[1px] top-[218px] w-[117px] h-[130px] bg-[#ece9d8] border border-[#a8a596] shadow-[1px_1px_2px_#0006] text-[6px]">
    <div class="h-[5px] bg-[#dddacd] flex justify-end items-center gap-[3px] pr-[2px]"><span class="w-[4px] h-px bg-[#666]"></span><svg class="size-[5px]" viewBox="0 0 5 5"><path d="M.5 .5L4.500 4.500M4.500 .5L.5 4.500" stroke="#555"/></svg></div>
    <div class="h-[9px] bg-[#d3d0c4] flex pl-[4px] text-[7px] text-[#222] whitespace-nowrap"><button class="pr-px border-r border-[#999]">Cha</button><button class="border-r border-[#999]">Para</button><button class="px-px">Stro</button><button class="bg-[#ece9d8] border border-b-0 border-[#999] rounded-t-[2px] px-[2px] leading-[8px]">◊ Text Wrap ×</button><svg class="size-[8px] ml-auto"><use href="#menu"/></svg></div>
    <div class="h-[20px] flex items-center gap-[5px] px-[3px] border-b border-[#c9c5b2]">
      <button aria-label="No text wrap" class="bg-white border border-[#aab4c8] p-px"><svg class="size-[8px]"><use href="#w1"/></svg></button><button aria-label="Bounding box"><svg class="size-[10px]"><use href="#w2"/></svg></button><button aria-label="Object shape"><svg class="size-[10px]"><use href="#w3"/></svg></button><button aria-label="Jump object"><svg class="size-[10px]"><use href="#w4"/></svg></button><button aria-label="Next column"><svg class="size-[10px]"><use href="#w5"/></svg></button>
      <label class="flex items-center gap-px text-[#aaa]"><input type="checkbox" disabled class="appearance-none size-[7px] bg-white border border-[#d0ccbc]">Invert</label>
    </div>
    <div class="h-[30px] flex items-center px-[4px]">
      <div class="flex flex-col gap-[2px] w-[46px]">
        <label class="flex h-[11px] items-center gap-px"><svg class="size-[9px]" viewBox="0 0 12 12" role="img" aria-label="Top offset"><path d="M2 1H10M6 2V6" stroke="#222" stroke-width="1.500"/><rect x="3" y="6" width="6" height="5"/></svg><span class="flex flex-1 min-w-0 h-[11px] items-center border border-[#b5c4d4]"><svg class="w-[6px] h-[8px] opacity-30"><use href="#spin"/></svg><input disabled value="0 mm" class="min-w-0 flex-1 pl-[4px] text-[#b8b5a6]"></span></label>
        <label class="flex h-[11px] items-center gap-px"><svg class="size-[9px]" viewBox="0 0 12 12" role="img" aria-label="Bottom offset"><path d="M2 11H10M6 6V10" stroke="#222" stroke-width="1.500"/><rect x="3" y="1" width="6" height="5"/></svg><span class="flex flex-1 min-w-0 h-[11px] items-center border border-[#b5c4d4]"><svg class="w-[6px] h-[8px] opacity-30"><use href="#spin"/></svg><input disabled value="0 mm" class="min-w-0 flex-1 pl-[4px] text-[#b8b5a6]"></span></label>
      </div>
      <svg class="w-[15px] h-[10px] text-[#888]"><use href="#chain"/></svg>
      <div class="flex flex-col gap-[2px] w-[46px]">
        <label class="flex h-[11px] items-center gap-px"><svg class="size-[9px]" viewBox="0 0 12 12" role="img" aria-label="Left offset"><path d="M0 3L4 6L0 9z"/><rect x="5" y="3" width="6" height="6" fill="#333"/></svg><span class="flex flex-1 min-w-0 h-[11px] items-center border border-[#b5c4d4]"><svg class="w-[6px] h-[8px] opacity-30"><use href="#spin"/></svg><input disabled value="0 mm" class="min-w-0 flex-1 pl-[4px] text-[#b8b5a6]"></span></label>
        <label class="flex h-[11px] items-center gap-px"><svg class="size-[9px]" viewBox="0 0 12 12" role="img" aria-label="Right offset"><path d="M12 3L8 6L12 9z"/><rect x="1" y="3" width="6" height="6" fill="#333"/></svg><span class="flex flex-1 min-w-0 h-[11px] items-center border border-[#b5c4d4]"><svg class="w-[6px] h-[8px] opacity-30"><use href="#spin"/></svg><input disabled value="0 mm" class="min-w-0 flex-1 pl-[4px] text-[#b8b5a6]"></span></label>
      </div>
    </div>
    <div class="border-t border-[#c9c5b2] px-[3px] flex flex-col">
      <div>Wrap Options:</div>
      <div class="flex items-center h-[11px] pr-px"><label for="wt" class="w-[32px] text-right pr-[2px]">Wrap To:</label><span class="flex flex-1 min-w-0 h-[11px] items-center border border-[#cbc8b8]"><select id="wt" disabled class="appearance-none min-w-0 flex-1 pl-px text-[#b0ad9e] opacity-100"><option>Both Right &amp; Left Sides</option></select><svg class="size-[8px] opacity-30"><use href="#down"/></svg></span></div>
      <div class="text-[#b0ad9e]">Contour Options:</div>
      <div class="flex items-center h-[11px] pr-px text-[#b0ad9e]"><label for="ct" class="w-[32px] text-right pr-[2px]">Type:</label><span class="flex flex-1 min-w-0 h-[10px] items-center border border-[#cbc8b8] bg-white"><select id="ct" disabled class="appearance-none min-w-0 flex-1"><option></option></select><svg class="size-[8px] opacity-30"><use href="#down"/></svg></span></div>
      <label class="flex items-center gap-px mt-[12px] ml-[2px] text-[#b0ad9e]"><input type="checkbox" disabled class="appearance-none size-[7px] bg-white border border-[#d0ccbc]">Include Inside Edges</label>
    </div>
  </section>

  <!-- Background window edge -->
  <div class="absolute left-0 top-[313px] w-[4px] h-[68px] bg-[#f4f7fd] border-t-[14px] border-t-[#6a9af0] border-r border-r-[#5d8ee8] rounded-tr-[4px]"></div>

  <!-- Highlight ring around the frame tools -->
  <svg class="absolute left-0 top-[43px] w-[46px] h-[68px] pointer-events-none" viewBox="0 0 46 68"><circle cx="12" cy="34.500" r="28" fill="none" stroke="#fe0000" stroke-width="9"/></svg>
</div>

<!-- Taskbar -->
<footer class="h-[16px] shrink-0 flex items-center bg-linear-to-b from-[#3a80f0] via-[#245edb] to-[#1f50c4] text-white text-[7px]">
  <div class="w-[125px] h-full flex items-center gap-px pl-[7px] bg-linear-to-b from-[#3cb0f8] via-[#1290e9] to-[#0f80d8]">
    <span class="w-[18px] mr-px">01:23</span>
    <svg class="size-[9px]" viewBox="0 0 8 8"><rect x="1" y="1" width="6" height="6" rx="2" fill="#e8d8d8"/><path d="M1 2L7 6" stroke="#d22" stroke-width="1.500"/></svg>
    <svg class="size-[9px]" viewBox="0 0 8 8"><circle cx="3" cy="3" r="2" fill="#2c3"/><circle cx="5.500" cy="5.500" r="2" fill="#183"/></svg>
    <svg class="size-[9px]" viewBox="0 0 8 8"><rect x="2" width="5" height="8" fill="#123a9c"/></svg>
    <svg class="size-[9px]" viewBox="0 0 8 8"><circle cx="4" cy="4" r="3" fill="#d9a0a0"/><path d="M2 2L6 6" stroke="#c11"/></svg>
    <svg class="size-[9px]"><use href="#pcx"/></svg>
    <svg class="size-[9px]"><use href="#pcx"/></svg>
    <svg class="size-[9px]"><use href="#pcs"/></svg>
    <svg class="size-[9px]" viewBox="0 0 8 8"><path d="M1 1L4 0L7 1C7 5 6 7 4 8C2 7 1 5 1 1z" fill="#f7d13a" stroke="#a80" stroke-width=".5"/></svg>
    <svg class="size-[9px]"><use href="#msn"/></svg>
  </div>
  <button aria-label="Show hidden icons" class="-ml-[6px] size-[9px] rounded-full bg-[#2a8ff2] border border-white/70"><svg class="size-[7px]" viewBox="0 0 8 8"><path d="M3 1.500L5.500 4L3 6.500" fill="none" stroke="#fff" stroke-width="1.400"/></svg></button>
  <span class="w-[3px] h-[2px] bg-[#123a90] ml-[3px] mr-[4px]"></span>
  <svg class="size-[9px]" viewBox="0 0 9 9"><rect width="9" height="9" fill="#37a43a"/><path d="M1.500 4.500L4.500 2V4H7.500V5.500H4.500V7z" fill="#fff"/></svg>
  <div class="w-[50px] h-[12px] ml-[2px] bg-white text-black text-center font-bold text-[6px] leading-[6px]"><div>nero</div><div class="text-[#555] text-[5px]">⊕ SEARCH</div></div>
  <span class="ml-auto mr-[9px] text-[6px]">EN</span>
  <div class="flex gap-[2px] h-[13px] text-[7px] leading-[11px] whitespace-nowrap">
    <button class="w-[60px] rounded-[2px] bg-[#3c81f3] flex items-center justify-end gap-[3px] pr-[4px]">...Windows Li <svg class="size-[8px]"><use href="#msn"/></svg></button>
    <button class="w-[59px] rounded-[2px] bg-[#3c81f3] flex items-center justify-end gap-[3px] pr-[4px]">...Adobe Pho <svg class="size-[8px]" viewBox="0 0 8 8"><rect width="8" height="8" fill="#0c3c70"/><path d="M2 7V1.500H4V4H2M7 3.500H5V5H7V6.500H5" fill="none" stroke="#9cf" stroke-width=".8"/></svg></button>
    <button class="w-[60px] rounded-[2px] bg-[#1e50b8] flex items-center justify-end gap-[3px] pr-[4px]">...Adobe InD <svg class="size-[8px]"><use href="#id"/></svg></button>
    <button class="w-[60px] rounded-[2px] bg-[#3c81f3] flex items-center justify-end gap-[3px] pr-[4px]">...COL - Chab <svg class="size-[8px]" viewBox="0 0 8 8"><circle cx="4" cy="4" r="3.500" fill="#e8e8f4"/><path d="M2 4H6M4 2V6" stroke="#89c"/></svg></button>
    <button class="w-[61px] rounded-[2px] bg-[#3c81f3] flex items-center justify-end gap-[3px] pr-[4px]">...Windows S <svg class="size-[8px]" viewBox="0 0 8 8"><rect y="3" width="5" height="5" fill="#123"/><circle cx="5" cy="2.500" r="2" fill="#3ac"/><rect x="4" y="4" width="4" height="4" fill="#d33"/></svg></button>
  </div>
  <button class="w-[64px] h-full ml-[6px] rounded-l-[4px] bg-linear-to-b from-[#5cb85a] via-[#3a983a] to-[#2c7f2c] flex items-center justify-end gap-[3px] pr-[8px] font-bold italic text-[11px] leading-[14px] font-['DejaVu_Sans',sans-serif]"><span dir="rtl" lang="he">התחל</span><svg class="w-[10px] h-[9px]" viewBox="0 0 10 9"><path d="M1 1Q3 0 5 1L4.500 4Q2.500 3 .5 4z" fill="#f05a28"/><path d="M5.500 1Q7.500 2 10 1L9.300 4Q7 5 5 4z" fill="#7ed04a"/><path d="M.4 4.500Q2.400 3.500 4.400 4.500L3.900 7.500Q2 6.500 0 7.500z" fill="#4a90f0"/><path d="M5 4.500Q7 5.500 9.200 4.500L8.700 7.500Q6.500 8.500 4.400 7.500z" fill="#fcd03a"/></svg></button>
</footer>

<script>
// Rulers: 20 mm between labels, ten ticks per label
const NS = 'http://www.w3.org/2000/svg';
const step = 27.3;
function add(svg, tag, attrs, text) {
  const e = document.createElementNS(NS, tag);
  for (const k in attrs) e.setAttribute(k, attrs[k]);
  if (text !== undefined) e.textContent = text;
  svg.appendChild(e);
}
function drawRulers() {
  const hr = document.getElementById('hr'), vr = document.getElementById('vr');
  // Window size less the docks and bars around the canvas
  const width = innerWidth - 179, height = innerHeight - 87;
  hr.replaceChildren();
  vr.replaceChildren();
  let h = '', v = '';
  for (let i = -6; 166 + i * step + 14 < width; i++) {
    const x = 166 + i * step;
    add(hr, 'text', {x: x + 1, y: 6, 'font-size': 6, fill: '#222'}, Math.abs(i) * 20);
    h += `M${Math.round(x) + .5} 0V9`;
    for (let t = 1; t < 10; t++) h += `M${Math.round(x + t * step / 10) + .5} ${t === 5 ? 5 : 7}V9`;
  }
  for (let i = 0; 3 + i * step + 14 < height; i++) {
    const y = 3 + i * step;
    String(i * 20).split('').forEach((c, n) =>
      add(vr, 'text', {transform: `translate(6 ${y + 5 + n * 4}) rotate(-90)`, 'font-size': 6, fill: '#222'}, c));
    v += `M0 ${Math.round(y) + .5}H10`;
    for (let t = 1; t < 10; t++) v += `M${t === 5 ? 6 : 8} ${Math.round(y + t * step / 10) + .5}H10`;
  }
  add(hr, 'path', {d: h, stroke: '#666'});
  add(vr, 'path', {d: v, stroke: '#666'});
}
drawRulers();
addEventListener('resize', drawRulers);
</script>
</body>
</html>
